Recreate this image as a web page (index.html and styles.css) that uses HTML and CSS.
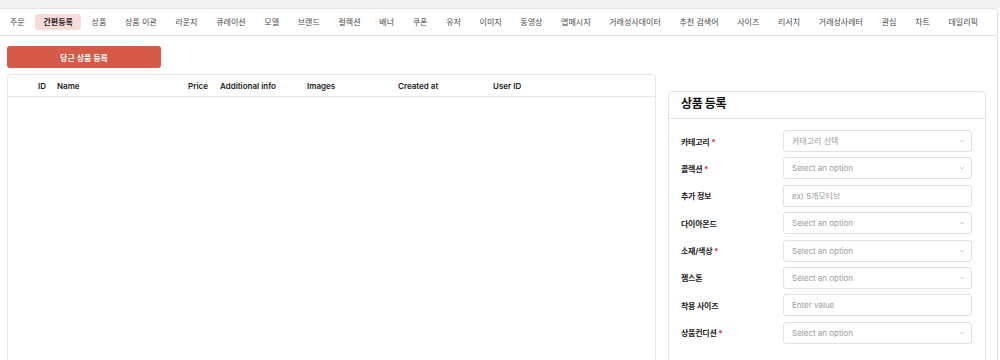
FILE: index.html
```html
<!DOCTYPE html>
<html lang="ko">
<head>
    <meta charset="UTF-8">
    <meta name="viewport" content="width=device-width, initial-scale=1.0">
    <title>간편등록</title>
    <link rel="stylesheet" href="styles.css">
</head>
<body>
    <div class="topstrip"></div>
    <div class="app">
        <div class="nav">
            <div class="tab">주문</div>
            <div class="tab active">간편등록</div>
            <div class="tab">상품</div>
            <div class="tab">상품 이관</div>
            <div class="tab">라운지</div>
            <div class="tab">큐레이션</div>
            <div class="tab">모델</div>
            <div class="tab">브랜드</div>
            <div class="tab">컬렉션</div>
            <div class="tab">배너</div>
            <div class="tab">쿠폰</div>
            <div class="tab">유저</div>
            <div class="tab">이미지</div>
            <div class="tab">동영상</div>
            <div class="tab">앱메시지</div>
            <div class="tab">거래성사데이터</div>
            <div class="tab">추천 검색어</div>
            <div class="tab">사이즈</div>
            <div class="tab">리서치</div>
            <div class="tab">거래성사레터</div>
            <div class="tab">관심</div>
            <div class="tab">차트</div>
            <div class="tab">데일리픽</div>
        </div>

        <div class="content">
            <button class="btn-carrot">당근 상품 등록</button>

            <div class="split">
                <div class="table-box">
                    <div class="thead">
                        <div></div>
                        <div>ID</div>
                        <div>Name</div>
                        <div>Price</div>
                        <div>Additional info</div>
                        <div>Images</div>
                        <div>Created at</div>
                        <div>User ID</div>
                    </div>
                </div>

                <div class="form-box">
                    <div class="form-title">상품 등록</div>
                    <div class="form-body">
                        <div class="row">
                            <label>카테고리 <span class="req">*</span></label>
                            <div class="field select ko">카테고리 선택<svg class="chev" viewBox="0 0 8 5"><path d="M1 1l3 3 3-3" fill="none" stroke="#b5b5b5" stroke-width="1"/></svg></div>
                        </div>
                        <div class="row">
                            <label>콜렉션 <span class="req">*</span></label>
                            <div class="field select">Select an option<svg class="chev" viewBox="0 0 8 5"><path d="M1 1l3 3 3-3" fill="none" stroke="#b5b5b5" stroke-width="1"/></svg></div>
                        </div>
                        <div class="row">
                            <label>추가 정보</label>
                            <div class="field ko">ex) 5개모티브</div>
                        </div>
                        <div class="row">
                            <label>다이아몬드</label>
                            <div class="field select">Select an option<svg class="chev" viewBox="0 0 8 5"><path d="M1 1l3 3 3-3" fill="none" stroke="#b5b5b5" stroke-width="1"/></svg></div>
                        </div>
                        <div class="row">
                            <label>소재/색상 <span class="req">*</span></label>
                            <div class="field select">Select an option<svg class="chev" viewBox="0 0 8 5"><path d="M1 1l3 3 3-3" fill="none" stroke="#b5b5b5" stroke-width="1"/></svg></div>
                        </div>
                        <div class="row">
                            <label>젬스톤</label>
                            <div class="field select">Select an option<svg class="chev" viewBox="0 0 8 5"><path d="M1 1l3 3 3-3" fill="none" stroke="#b5b5b5" stroke-width="1"/></svg></div>
                        </div>
                        <div class="row">
                            <label>착용 사이즈</label>
                            <div class="field">Enter value</div>
                        </div>
                        <div class="row">
                            <label>상품컨디션 <span class="req">*</span></label>
                            <div class="field select">Select an option<svg class="chev" viewBox="0 0 8 5"><path d="M1 1l3 3 3-3" fill="none" stroke="#b5b5b5" stroke-width="1"/></svg></div>
                        </div>
                    </div>
                </div>
            </div>
        </div>
    </div>
</body>
</html>
```

FILE: styles.css
```css
body {
    margin: 0;
    padding: 0;
    background: #fff;
    font-family: Inter, "Noto Sans CJK KR", sans-serif;
    font-size: 8px;
    color: #222;
    overflow: hidden;
}
.topstrip {
    height: 8px;
    background: #f3f3f4;
}
.app {
    width: 997px;
    border-top: 1px solid #e4e4e4;
    border-right: 1px solid #e4e4e4;
    border-top-right-radius: 4px;
    height: 360px;
}
.nav {
    display: flex;
    align-items: center;
    gap: 2.7px;
    height: 26px;
    padding-left: 2px;
    border-bottom: 1px solid #e6e6e6;
}
.tab {
    padding: 0 8px;
    height: 16px;
    line-height: 16px;
    color: #4a4a4a;
    white-space: nowrap;
    border-radius: 3px;
}
.tab.active {
    background: #f9dcd9;
    color: #222;
    font-weight: 600;
}
.content {
    padding: 10px 0 0 7px;
}
.btn-carrot {
    display: block;
    width: 154px;
    height: 22px;
    border: none;
    border-radius: 3px;
    background: #d65a48;
    color: #fff;
    font-family: Inter, "Noto Sans CJK KR", sans-serif;
    font-size: 8px;
    font-weight: 700;
    padding: 0;
}
.split {
    display: grid;
    grid-template-columns: 649px 318px;
    gap: 12px;
    align-items: start;
    margin-top: 6px;
}
.table-box {
    border: 1px solid #e6e6e6;
    border-radius: 4px;
    height: 320px;
}
.thead {
    display: grid;
    grid-template-columns: 30px 19px 131px 32px 87px 91px 95px 1fr;
    height: 21px;
    align-items: center;
    border-bottom: 1px solid #e6e6e6;
    font-weight: 600;
    color: #1a1a1a;
}
.form-box {
    margin-top: 17px;
    border: 1px solid #e3e3e3;
    border-radius: 4px;
    height: 300px;
}
.form-title {
    height: 26px;
    line-height: 24px;
    padding-left: 12px;
    border-bottom: 1px solid #e6e6e6;
    font-size: 12px;
    font-weight: 700;
    color: #111;
    letter-spacing: -0.03em;
}
.form-body {
    padding: 11px 13px 0 12px;
    display: flex;
    flex-direction: column;
    gap: 5.4px;
}
.row {
    display: flex;
    align-items: center;
}
.row label {
    width: 102px;
    font-weight: 700;
    color: #222;
    letter-spacing: -0.03em;
}
.req {
    color: #e0332e;
    font-size: 8px;
}
.field {
    position: relative;
    flex: 1;
    height: 20px;
    line-height: 20px;
    border: 1px solid #e1e1e1;
    border-radius: 3px;
    padding-left: 8px;
    color: #9c9c9c;
}
.chev {
    position: absolute;
    right: 6px;
    top: 8px;
    width: 6px;
    height: 4px;
}
```
